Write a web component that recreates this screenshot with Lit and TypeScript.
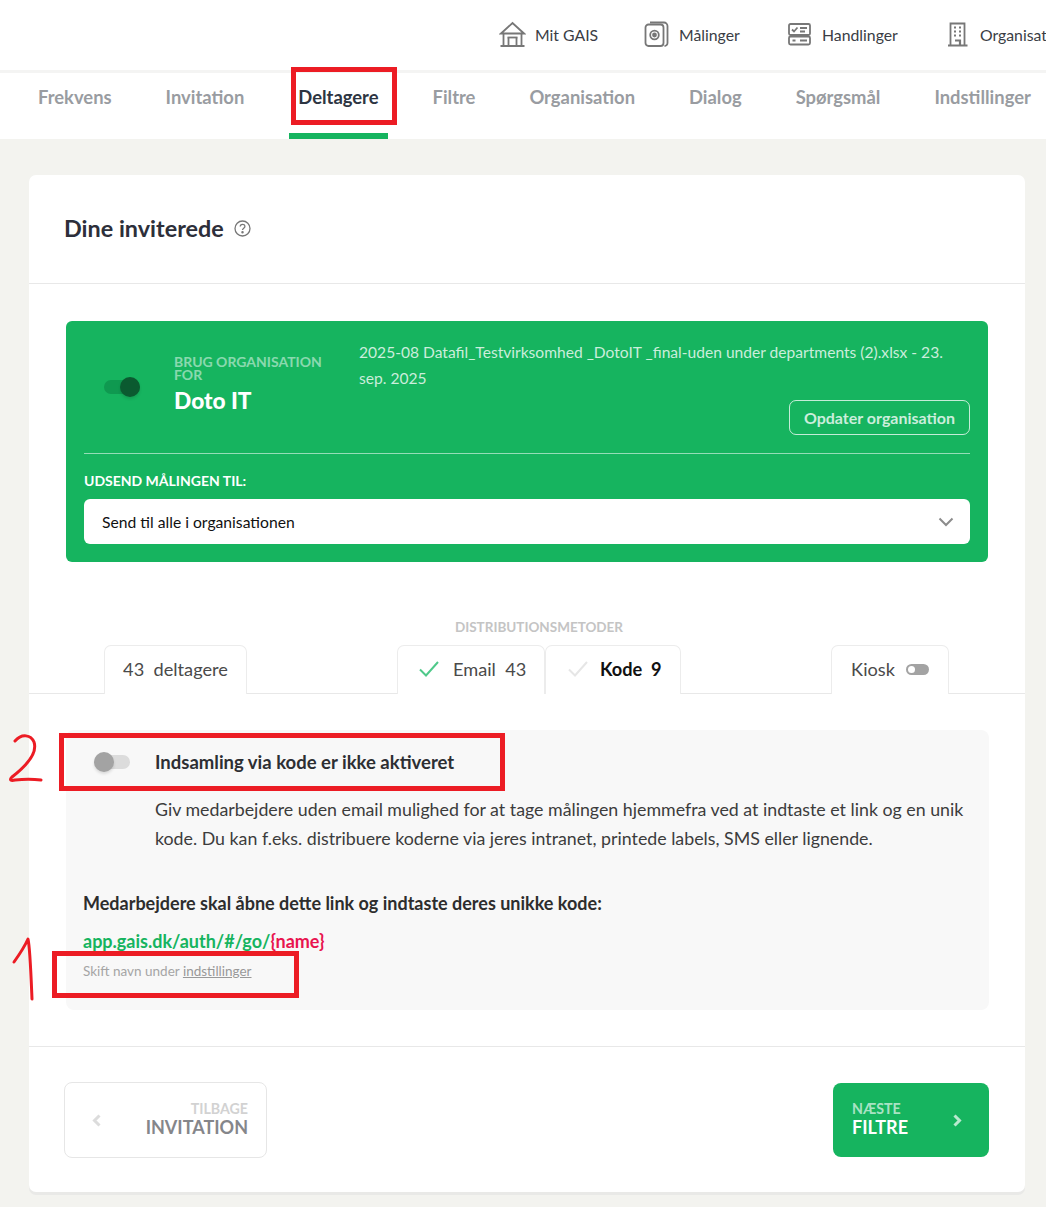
import { LitElement, html, css, svg } from "lit";
import { customElement } from "lit/decorators.js";

const chevron = (d: string, color: string, w = 3) => html`<svg class="chev" width="16" height="16" viewBox="0 0 16 16" fill="none" stroke=${color} stroke-width=${w} ><path d=${d} /></svg>`;

@customElement("app-root")
export class AppRoot extends LitElement {
  static styles = css`
    :host { display: block; position: relative; width: 1046px; height: 1207px; overflow: hidden; background: #f3f3ef; font-family: Lato, "Noto Sans", sans-serif; color: #2d2f38; }
    * { box-sizing: border-box; }
    .top { height: 70px; background: #fff; display: flex; align-items: center; padding-left: 499px; padding-bottom: 1px; white-space: nowrap; color: #3a3d45; font-size: 15.8px; }
    .top a { display: flex; align-items: center; gap: 9px; flex: none; }
    .top a:nth-child(1) { width: 145px; }
    .top a:nth-child(2) { width: 143px; }
    .top a:nth-child(3) { width: 159px; }
    .top svg { flex: none; display: block; }
    .strip { height: 3px; background: #f4f4f3; }
    .sub { height: 66px; background: #fff; display: flex; gap: 36px; padding-left: 29px; white-space: nowrap; }
    .sub a { padding: 13px 9px 0; font-size: 18.4px; font-weight: 700; color: #999ca1; line-height: 22px; border-bottom: 6px solid transparent; flex: none; }
    .sub a.on { color: #2d3542; border-bottom-color: #16b45f; }
    .wrap { padding: 36px 21px 0 29px; }
    .card { background: #fff; border-radius: 7px; height: 1017px; box-shadow: 0 3px 0 #e9e9e7; display: flex; flex-direction: column; }
    .head { height: 109px; border-bottom: 1px solid #e8e8e8; display: flex; align-items: center; gap: 10px; padding: 0 0 2px 35px; flex: none; }
    .head h1 { margin: 0; font-size: 23.4px; line-height: 30px; font-weight: 700; color: #2d2f3a; }
    .green { margin: 37px 37px 0; height: 241px; background: #16b45f; border-radius: 6px; padding: 0 18px; color: #fff; display: flex; flex-direction: column; flex: none; }
    .g-top { height: 133px; border-bottom: 1px solid rgba(255,255,255,.55); display: grid; grid-template-columns: 90px 185px 1fr; }
    .sw { display: flex; align-items: center; justify-content: flex-start; padding: 0 0 0 20px; height: 132px; }
    .track { position: relative; width: 36px; height: 14px; border-radius: 7px; }
    .track.on { background: #0f9950; }
    .track.off { background: #dcdcdc; width: 36px; }
    .thumb { position: absolute; top: -3px; width: 20px; height: 20px; border-radius: 50%; box-shadow: 0 2px 3px rgba(0,0,0,.12); }
    .track.on .thumb { left: 16px; background: #0b5a30; }
    .track.off .thumb { left: 0; background: #a3a3a3; }
    .g-lab { padding: 34px 30px 0 0; font-size: 14px; line-height: 13px; font-weight: 700; color: rgba(255,255,255,.5); }
    .g-lab b { display: block; margin-top: 4px; font-size: 22.7px; line-height: 32px; color: #fff; white-space: nowrap; }
    .g-file { display: flex; flex-direction: column; align-items: flex-end; padding-top: 18px; }
    .g-file p { margin: 0; align-self: stretch; font-size: 15.6px; line-height: 26px; color: rgba(255,255,255,.78); padding-right: 20px; }
    .upd { margin-top: 9px; height: 35px; width: 181px; border: 1px solid rgba(255,255,255,.75); border-radius: 7px; display: flex; align-items: center; justify-content: center; padding-bottom: 1px; font-size: 16px; font-weight: 700; color: rgba(255,255,255,.78); }
    .g-to { margin-top: 18px; font-size: 14px; line-height: 18px; font-weight: 700; color: #fff; }
    .sel { margin-top: 9px; height: 45px; background: #fff; border-radius: 6px; display: flex; align-items: center; justify-content: space-between; padding: 0 16px 0 18px; font-size: 15.7px; color: #111; }
    .tabs { margin-top: 59px; height: 73px; padding-left: 75px; display: flex; align-items: flex-end; border-bottom: 1px solid #e8e8e8; flex: none; }
    .tab { height: 49px; margin-bottom: -1px; border: 1px solid #ececec; border-bottom: 0; border-radius: 7px 7px 0 0; display: flex; align-items: center; justify-content: center; padding-bottom: 2px; font-size: 18.2px; color: #4a4a4a; background: #fff; white-space: pre; flex: none; }
    .tab svg { flex: none; }
    .group { margin-left: 150px; width: 284px; display: flex; flex-direction: column; align-items: center; }
    .group small { font-size: 13.5px; line-height: 16px; font-weight: 700; color: #c4c4c4; margin-bottom: 10px; }
    .group div { display: flex; align-self: stretch; }
    .t1 { width: 143px; }
    .t2 { width: 148px; justify-content: flex-start; padding-left: 20px; gap: 13px; }
    .t3 { width: 136px; justify-content: flex-start; padding-left: 21px; gap: 11px; color: #111; font-weight: 700; z-index: 1; }
    .t4 { width: 118px; margin-left: 150px; gap: 11px; }
    .mini { width: 23px; height: 11px; background: #a3a3a3; border-radius: 6px; position: relative; flex: none; }
    .mini::after { content: ""; position: absolute; left: 2px; top: 2px; width: 7px; height: 7px; background: #fff; border-radius: 50%; }
    .gray { margin: 36px 36px 0 37px; height: 280px; background: #f8f8f8; border-radius: 8px; padding: 0 17px; flex: none; }
    .g-row { height: 64px; display: flex; align-items: center; font-size: 18.5px; font-weight: 700; color: #2d2f33; }
    .g-row .sw2 { width: 72px; padding-left: 11px; flex: none; }
    .desc { margin: 1px 0 0 72px; font-size: 17.8px; line-height: 29px; color: #3c3c3c; white-space: nowrap; }
    .instr { margin-top: 38px; font-size: 18px; line-height: 24px; font-weight: 700; color: #2d2d2d; }
    .url { margin-top: 14px; font-size: 18px; line-height: 24px; font-weight: 700; color: #16b45f; }
    .url span { color: #e8144f; }
    .hint { margin-top: 9px; font-size: 13.5px; line-height: 18px; color: #a5a5a5; }
    .hint u { color: #999; }
    .foot { margin-top: 36px; border-top: 1px solid #e8e8e8; display: flex; justify-content: space-between; padding: 35px 36px 0 35px; align-items: center; }
    .btn { border-radius: 8px; display: flex; align-items: center; line-height: 1; font-weight: 700; white-space: nowrap; }
    .back { width: 203px; height: 76px; border: 1px solid #e6e6e6; padding: 0 18px 0 24px; justify-content: space-between; text-align: right; }
    .next { width: 156px; height: 74px; background: #16b45f; padding: 0 24px 0 19px; justify-content: space-between; color: #fff; }
    .btn small { display: block; font-size: 14.2px; line-height: 14px; }
    .btn strong { display: block; font-size: 18px; line-height: 22px; font-weight: 700; }
    .back small { color: #d2d2d2; } .back strong { color: #85868a; }
    .next small { color: rgba(255,255,255,.65); } .next strong { color: #fff; }
    .mark { position: absolute; border: 5px solid #ec1c24; pointer-events: none; }
    .m1 { left: 291px; top: 67px; width: 106px; height: 58px; }
    .m2 { left: 59px; top: 733px; width: 446px; height: 58px; }
    .m3 { left: 52px; top: 951px; width: 247px; height: 47px; }
    .hand { position: absolute; left: 0; top: 725px; pointer-events: none; }
  `;

  render() {
    return html`
      <div class="top">
        <a><svg width="27" height="27" viewBox="0 0 27 27" fill="none" stroke="#777" stroke-width="1.8"><path d="M2 12.500 13.500 2 25 12.500H2Z"/><path d="M4.500 13V24M22.500 13V24M9.500 16.500V24M17.500 16.500V24"/><path d="M1.500 25h24" stroke-width="2"/><path d="M8.500 16.500h10"/></svg>Mit GAIS</a>
        <a><svg width="26" height="27" viewBox="0 0 26 27" fill="none" stroke="#777" stroke-width="1.800"><rect x="1.500" y="3.500" width="18" height="21.500" rx="3"/><path d="M6 1.500h14a3.500 3.500 0 0 1 3.500 3.500v17a3 3 0 0 1-3 3"/><circle cx="10.500" cy="14" r="4.300"/><circle cx="10.500" cy="14" r="1.500" fill="#777"/></svg>Målinger</a>
        <a><svg width="26" height="27" viewBox="0 0 26 27" fill="none" stroke="#777" stroke-width="1.800"><rect x="2" y="3" width="21" height="11" rx="1.500"/><rect x="2" y="15.500" width="21" height="8" rx="1.500"/><path d="m5 8.500 2 2 3.500-4M13 7h7M13 10.500h5M5.500 19.500h3M13 19.500h7"/></svg>Handlinger</a>
        <a><svg width="25" height="27" viewBox="0 0 25 27" fill="none" stroke="#777" stroke-width="1.800"><path d="M4.500 24V2.500h14V24M2 24.500h19.500"/><path stroke-width="2.200" d="M8 6.500h2M13 6.500h2M8 10.500h2M13 10.500h2M8 14.500h2M13 14.500h2M9 19.500h5V24"/></svg>Organisationer</a>
      </div>
      <div class="strip"></div>
      <nav class="sub">
        <a>Frekvens</a><a>Invitation</a><a class="on">Deltagere</a><a>Filtre</a><a>Organisation</a><a>Dialog</a><a>Spørgsmål</a><a>Indstillinger</a>
      </nav>
      <div class="wrap">
        <section class="card">
          <div class="head">
            <h1>Dine inviterede</h1>
            <svg width="17" height="17" viewBox="0 0 17 17" fill="none" stroke="#777" stroke-width="1.300"><circle cx="8.500" cy="8.500" r="7.500"/><path d="M6.200 6.600c0-3 4.700-3 4.700-.1 0 1.800-2.400 1.800-2.400 3.600"/><circle cx="8.500" cy="12.300" r=".6" fill="#777"/></svg>
          </div>
          <div class="green">
            <div class="g-top">
              <div class="sw"><div class="track on"><div class="thumb"></div></div></div>
              <div class="g-lab">BRUG ORGANISATION FOR<b>Doto IT</b></div>
              <div class="g-file">
                <p>2025-08 Datafil_Testvirksomhed _DotoIT _final-uden under departments (2).xlsx - 23. sep. 2025</p>
                <div class="upd">Opdater organisation</div>
              </div>
            </div>
            <div class="g-to">UDSEND MÅLINGEN TIL:</div>
            <div class="sel">Send til alle i organisationen
              ${chevron("M1.500 4.500 8 11l6.500-6.500", "#8c8c8c", 2)}
            </div>
          </div>
          <div class="tabs">
            <div class="tab t1">43  deltagere</div>
            <div class="group">
              <small>DISTRIBUTIONSMETODER</small>
              <div>
                <div class="tab t2"><svg width="22" height="18" viewBox="0 0 22 18" fill="none" stroke="#4fc98a" stroke-width="2"><path d="m2 9.500 6 6L20 2"/></svg>Email  43</div>
                <div class="tab t3"><svg width="22" height="18" viewBox="0 0 22 18" fill="none" stroke="#e6e6e6" stroke-width="2"><path d="m2 9.500 6 6L20 2"/></svg>Kode  9</div>
              </div>
            </div>
            <div class="tab t4">Kiosk<span class="mini"></span></div>
          </div>
          <div class="gray">
            <div class="g-row"><div class="sw2"><div class="track off"><div class="thumb"></div></div></div>Indsamling via kode er ikke aktiveret</div>
            <div class="desc">Giv medarbejdere uden email mulighed for at tage målingen hjemmefra ved at indtaste et link og en unik<br>kode. Du kan f.eks. distribuere koderne via jeres intranet, printede labels, SMS eller lignende.</div>
            <div class="instr">Medarbejdere skal åbne dette link og indtaste deres unikke kode:</div>
            <div class="url">app.gais.dk/auth/#/go/<span>{name}</span></div>
            <div class="hint">Skift navn under <u>indstillinger</u></div>
          </div>
          <div class="foot">
            <div class="btn back">${chevron("M10.500 3.500 5.500 8.500l5 5", "#dcdcdc")}<div><small>TILBAGE</small><strong>INVITATION</strong></div></div>
            <div class="btn next"><div><small>NÆSTE</small><strong>FILTRE</strong></div>${chevron("M5.500 3.500 10.500 8.500l-5 5", "rgba(255,255,255,.7)")}</div>
          </div>
        </section>
      </div>
      <div class="mark m1"></div>
      <div class="mark m2"></div>
      <div class="mark m3"></div>
      <svg class="hand" width="50" height="300" viewBox="0 0 50 300" fill="none" stroke="#ec1c24" stroke-width="3" stroke-linecap="round" stroke-linejoin="round">
        ${svg`<path d="M15 16C22 8 31 10 34 17 37 26 30 38 12 52 9 55 11 56 15 55 24 54 33 54 41 55"/><path d="M14 237C19 230 24 223 28 214 30 222 31 250 32 274"/>`}
      </svg>
    `;
  }
}
